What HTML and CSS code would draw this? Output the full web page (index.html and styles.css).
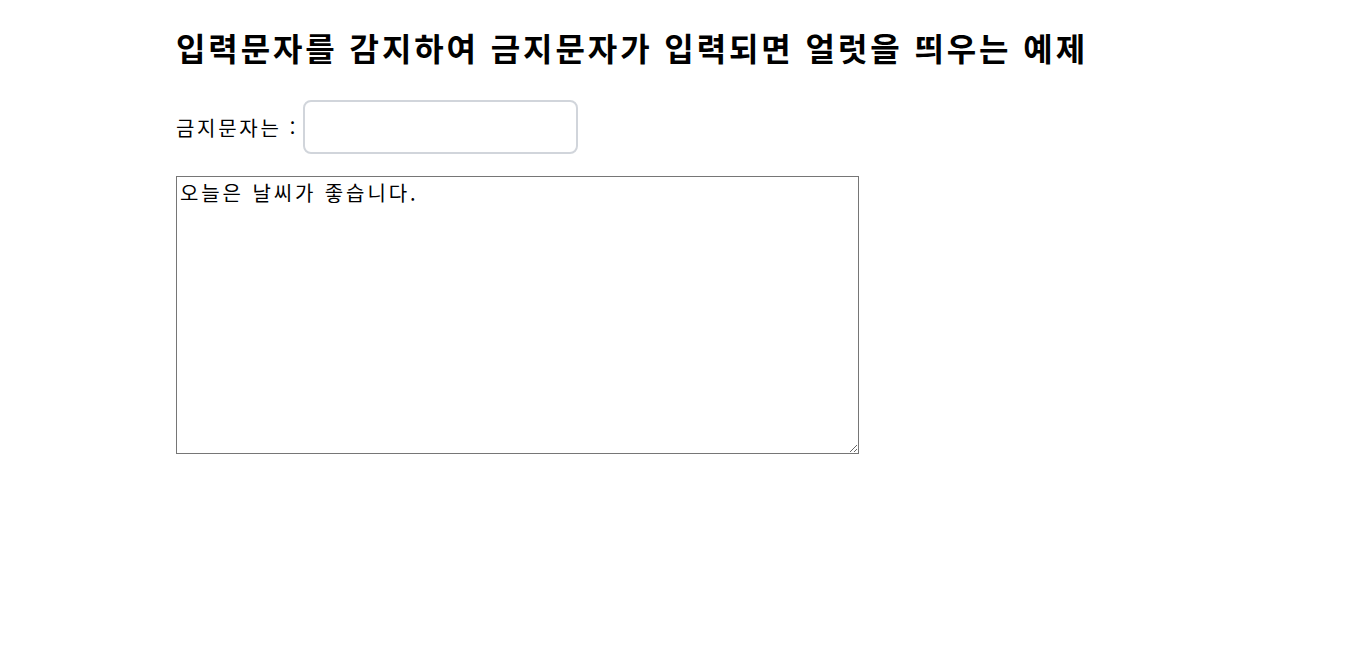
FILE: index.html
```html
<!DOCTYPE html>
<html lang="ko">

<head>
    <meta charset="UTF-8">
    <title>금지문자 감지</title>
    <link rel="stylesheet" href="styles.css">
</head>

<body>
    <div class="container">
        <h1>입력문자를 감지하여 금지문자가 입력되면 얼럿을 띄우는 예제</h1>

        <div class="word-row">
            <label for="banWord">금지문자는 :</label>
            <input type="text" id="banWord">
        </div>

        <textarea id="content">오늘은 날씨가 좋습니다.</textarea>
    </div>
</body>

</html>
```
FILE: styles.css
```css
body {
    margin: 0;
    font-family: "Noto Sans CJK KR", "Noto Sans", sans-serif;
    color: #000000;
    background-color: #ffffff;
}

.container {
    padding: 22px 176px;
}

h1 {
    margin: 0 0 28px;
    font-size: 32px;
    line-height: 50px;
    font-weight: 700;
    letter-spacing: 2.9px;
}

.word-row {
    display: flex;
    align-items: center;
    gap: 5px;
    margin-bottom: 22px;
}

.word-row label {
    font-size: 20px;
    letter-spacing: 2.7px;
}

.word-row input {
    width: 275px;
    height: 54px;
    box-sizing: border-box;
    border: 2px solid #d1d5db;
    border-radius: 8px;
    font-size: 20px;
    padding: 0 10px;
    outline: none;
}

textarea {
    display: block;
    width: 683px;
    height: 278px;
    box-sizing: border-box;
    margin: 0;
    padding: 4px 3px;
    border: 1px solid #767676;
    font-family: inherit;
    font-size: 20px;
    line-height: 1.2;
    letter-spacing: 2.9px;
    resize: both;
}
```
